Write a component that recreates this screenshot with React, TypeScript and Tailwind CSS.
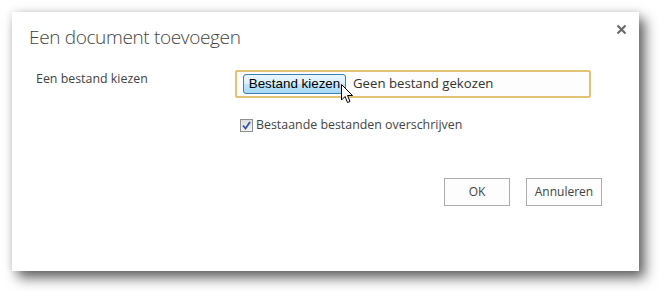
export default function App() {
  return (
    <div className="h-[291px] w-[659px] bg-white pl-3 pt-3 font-['Segoe_UI','Open_Sans',sans-serif]">
      <div className="relative flex h-[259px] w-[627px] flex-col bg-white shadow-[6px_7px_12px_rgba(0,0,0,0.6),0_0_8px_rgba(0,0,0,0.12)]">
        <div className="flex items-start justify-between pl-[17px] pr-3 pt-[12px]">
          <h2 className="text-[19px] font-light leading-[26px] tracking-[-0.35px] text-[#444]">
            Een document toevoegen
          </h2>
          <button aria-label="Sluiten" className="mt-0 text-[#666]">
            <svg width="11" height="11" viewBox="0 0 11 11">
              <path d="M1.5 1.5 L9.5 9.5 M9.5 1.5 L1.5 9.5" stroke="#6a6a6a" strokeWidth="2.2" />
            </svg>
          </button>
        </div>

        <div className="mt-[20px] flex pl-[24px]">
          <div className="w-[199px] pt-[1px] text-[12.4px] leading-[16px] text-[#444]">
            Een bestand kiezen
          </div>
          <div className="flex flex-col">
            <div className="relative flex h-[28px] w-[356px] items-center rounded-[2px] border-2 border-[#e2c274] bg-[#fdfdfd] pl-[6px]">
              <div className="flex h-[20px] w-[103px] items-center justify-center rounded-[3px] border border-[#3c7fb1] bg-[linear-gradient(#eaf6fd,#d9f0fc_50%,#bee6fd_50%,#a7d9f5)] text-[13.4px] leading-none text-black font-['Liberation_Sans',sans-serif]">
                Bestand kiezen
              </div>
              <span className="ml-[7px] text-[13.2px] text-[#333]">Geen bestand gekozen</span>
              <svg
                className="absolute left-[104px] top-[12px]"
                width="13"
                height="20"
                viewBox="0 0 13 20"
              >
                <path
                  d="M0.5 0.5 L0.5 16 L4 12.5 L6.5 18.5 L9 17.5 L6.5 11.5 L11.5 11.5 Z"
                  fill="#fff"
                  stroke="#000"
                  strokeWidth="1"
                  strokeLinejoin="miter"
                />
              </svg>
            </div>
            <label className="ml-[5px] mt-[19px] flex items-center gap-[3px] text-[12.4px] leading-[16px] text-[#444]">
              <span className="flex h-[13px] w-[13px] items-center justify-center border border-[#8f8f8f] bg-[linear-gradient(#dcdcdc,#f6f6f6)]">
                <svg width="9" height="9" viewBox="0 0 9 9">
                  <path d="M1 4.5 L3.5 7.5 L8 1" fill="none" stroke="#3352a8" strokeWidth="1.8" />
                </svg>
              </span>
              Bestaande bestanden overschrijven
            </label>
          </div>
        </div>

        <div className="mt-[45px] flex justify-end gap-4 pr-[37px]">
          <button className="h-[28px] w-[66px] border border-[#ababab] bg-[#fdfdfd] text-[12px] text-[#444]">
            OK
          </button>
          <button className="h-[28px] w-[76px] border border-[#ababab] bg-[#fdfdfd] text-[12px] text-[#444]">
            Annuleren
          </button>
        </div>
      </div>
    </div>
  );
}
